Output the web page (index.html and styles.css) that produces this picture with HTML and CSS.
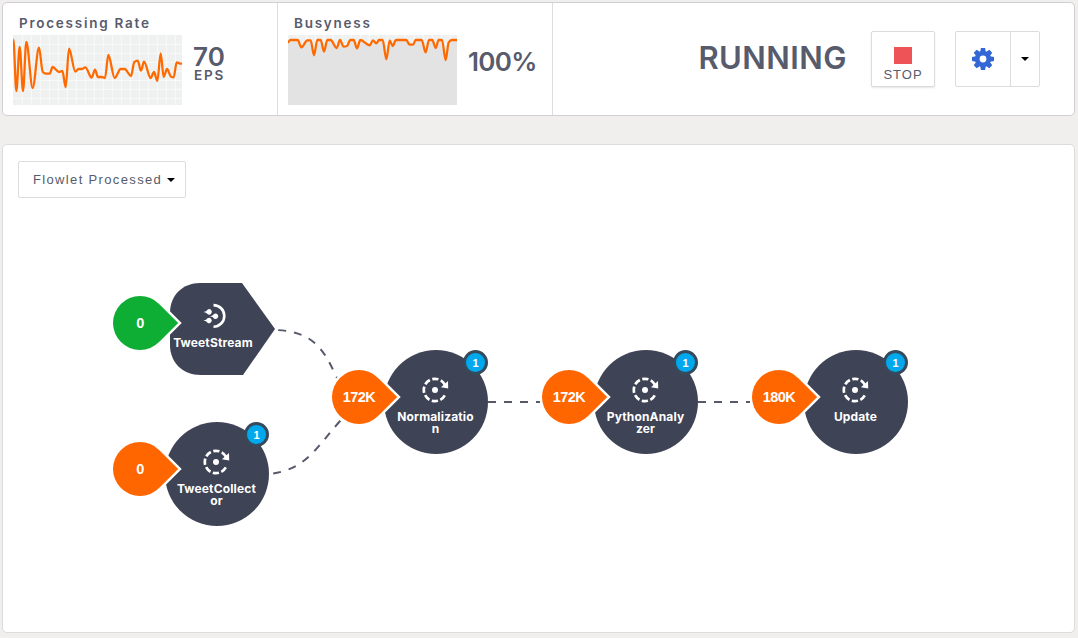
FILE: index.html
```html
<!DOCTYPE html>
<html lang="en">
<head>
<meta charset="utf-8">
<title>Flow status</title>
<link rel="stylesheet" href="styles.css">
</head>
<body>
<svg width="0" height="0" class="defs">
  <symbol id="flowlet" viewBox="0 0 28 28">
    <circle cx="14" cy="14" r="11.2" fill="none" stroke="#fff" stroke-width="2.7" stroke-dasharray="0 5.67 6.25 2.55 6.25 2.55 6.25 2.55 6.25 2.55 6.25 2.55 6.25 2.55 6.25 5.67"/>
    <circle cx="14" cy="14" r="3"/>
    <path d="M20 11.300 27.200 12.400 27 5z"/>
  </symbol>
</svg>

<header class="panel summary">
  <section class="metric">
    <h2>Processing Rate</h2>
    <div class="metric-body">
      <svg class="chart" id="rate" viewBox="39 105 507 210"></svg>
      <div class="value rate"><strong>70</strong><span>EPS</span></div>
    </div>
  </section>
  <section class="metric">
    <h2>Busyness</h2>
    <div class="metric-body">
      <svg class="chart" id="busy" viewBox="39 105 507 210"></svg>
      <div class="value busy"><strong>100%</strong></div>
    </div>
  </section>
  <div class="controls">
    <span class="status">RUNNING</span>
    <button class="btn stop"><i></i><span>STOP</span></button>
    <div class="btn split">
      <span class="gear"><svg width="22" height="22" viewBox="-11 -11 22 22" fill="#3367d6">
        <circle r="5.7" fill="none" stroke="#3367d6" stroke-width="4.6"/>
        <g id="teeth"></g>
      </svg></span>
      <span class="more"><b class="caret"></b></span>
    </div>
  </div>
</header>

<main class="panel flow">
  <button class="btn select">Flowlet Processed<b class="caret"></b></button>
  <div class="canvas">
    <svg class="links" width="1078" height="638" fill="none" stroke="#56596b" stroke-width="2" stroke-dasharray="8 8">
      <path d="M275 330C316 331 325 353 337 378" stroke-dashoffset="-3"/>
      <path d="M269 474C307 470 317 446 341 420" stroke-dashoffset="-4"/>
      <path d="M488 402H595M698 402H805"/>
    </svg>

    <div class="node stream" style="left:170px;top:283px">
      <svg class="shape" width="105" height="92"><path d="M30 0H72L105 46 73 92H31C12 92 0 79 0 62V30C0 12 13 0 30 0Z" fill="#3e4355"/></svg>
      <svg class="icon" width="28" height="28" viewBox="0 0 28 28"><path d="M13.5 3.1A10.8 10.8 0 0 1 13.500 24.700" fill="none" stroke="#fff" stroke-width="2.6"/><path d="M3.500 9.900Q6.500 9.400 7.500 7.700A2.700 2.700 0 1 1 7.500 12Q6.500 10.400 3.500 9.900ZM10 14.200Q13 13.700 14 12A2.700 2.700 0 1 1 14 16.400Q13 14.700 10 14.200ZM3.500 18.500Q6.500 18 7.500 16.300A2.700 2.700 0 1 1 7.500 20.700Q6.500 19 3.500 18.500Z"/></svg>
      <span class="label">TweetStream</span>
    </div>
    <div class="node" style="left:165px;top:422px"><svg class="icon" width="28" height="28"><use href="#flowlet"/></svg><span class="label">TweetCollect<br>or</span><em>1</em></div>
    <div class="node" style="left:384px;top:350px"><svg class="icon" width="28" height="28"><use href="#flowlet"/></svg><span class="label">Normalizatio<br>n</span><em>1</em></div>
    <div class="node" style="left:594px;top:350px"><svg class="icon" width="28" height="28"><use href="#flowlet"/></svg><span class="label">PythonAnaly<br>zer</span><em>1</em></div>
    <div class="node" style="left:804px;top:350px"><svg class="icon" width="28" height="28"><use href="#flowlet"/></svg><span class="label">Update</span><em>1</em></div>

    <div class="drop green" style="left:113px;top:296px"><span>0</span></div>
    <div class="drop" style="left:113px;top:442px"><span>0</span></div>
    <div class="drop" style="left:332px;top:370px"><span>172K</span></div>
    <div class="drop" style="left:542px;top:370px"><span>172K</span></div>
    <div class="drop" style="left:752px;top:370px"><span>180K</span></div>
  </div>
</main>
<script src="charts.js"></script>
</body>
</html>
```
FILE: styles.css
```css
* { box-sizing: border-box; }
body {
  margin: 0;
  padding: 2px 3px 5px 2px;
  height: 638px;
  overflow: hidden;
  background: #f0efed;
  font-family: "Liberation Sans", Arial, sans-serif;
  color: #575b6c;
}
.defs { position: absolute; }
.panel { background: #fff; border: 1px solid #dcdcdc; border-radius: 5px; }
.summary { display: flex; height: 114px; border-color: #cfcfd4; }
.metric { width: 275px; border-right: 1px solid #dcdcdc; padding: 12px 0 0 10px; }
.metric h2 { margin: 0 0 4px 6px; font: 600 13.5px/16px Inter, sans-serif; letter-spacing: 1.75px; }
.metric-body { display: flex; gap: 11px; }
.chart { width: 169px; height: 70px; background: #eff1f1; }
.value { font-family: Inter, sans-serif; font-weight: 600; }
.value strong { display: block; font-size: 26px; font-weight: 600; line-height: 26px; letter-spacing: .1px; }
.rate { padding-top: 9px; }
.rate span { display: block; font-size: 13.5px; line-height: 16px; letter-spacing: 1.8px; margin: -3px 0 0 1px; }
.busy { padding-top: 14px; }
.busy strong { letter-spacing: -.7px; }
.controls { flex: 1; display: flex; justify-content: flex-end; padding: 28px 34px 0 0; }
.status { font: 600 31px/54px Inter, sans-serif; letter-spacing: .45px; margin-right: 24px; }
.btn { background: #fff; border: 1px solid #dcdcdc; border-radius: 2px; padding: 0; color: inherit; font-family: inherit; }
.stop { width: 64px; height: 56px; margin-right: 20px; display: flex; flex-direction: column; align-items: center; padding-top: 15px; box-shadow: 0 1px 2px #0000001a; }
.stop i { width: 18px; height: 17px; background: #ee5358; }
.stop span { font-size: 13px; line-height: 15px; letter-spacing: 1px; margin: 3px 0 0 0; }
.split { display: flex; width: 85px; height: 56px; }
.gear { width: 55px; border-right: 1px solid #dcdcdc; display: flex; align-items: center; justify-content: center; }
.gear svg { margin-top: -1px; }
.more { flex: 1; display: flex; align-items: center; justify-content: center; }
.caret { border: 4px solid transparent; border-top-color: #000; border-bottom: 0; }
.flow { margin-top: 28px; height: 489px; padding: 16px 0 0 15px; }
.select { display: flex; align-items: center; gap: 5px; width: 168px; height: 37px; padding-left: 14px; font-size: 13px; letter-spacing: 1.35px; white-space: nowrap; }
.canvas, .links { position: absolute; left: 0; top: 0; }
.node { position: absolute; width: 104px; height: 104px; border-radius: 50%; background: #3e4355; color: #fff; }
.stream { width: 105px; height: 92px; background: none; border-radius: 0; }
.shape { position: absolute; left: 0; top: 0; }
.icon { position: absolute; left: 37px; top: 26px; fill: #fff; }
.stream .icon { left: 30px; top: 19px; }
.label { position: absolute; left: -1px; right: 0; top: 61px; text-align: center; font: 700 12px/12px Inter, sans-serif; letter-spacing: .15px; }
.stream .label { top: 54px; left: -19px; }
.node em { position: absolute; left: 79px; top: 0; width: 25px; height: 25px; border: 3px solid #374a5b; border-radius: 50%; background: #00a9ee; font: 700 11px/20px "Liberation Sans", sans-serif; text-align: center; }
.drop { position: absolute; width: 54px; height: 54px; }
.drop::before { content: ""; position: absolute; inset: 0; background: #ff6600; border-radius: 50% 0 50% 50%; transform: rotate(45deg); box-shadow: 0 0 0 2.500px #fff; }
.green::before { background: #0dae33; }
.drop span { position: relative; display: block; text-align: center; font-size: 14.500px; font-weight: 700; line-height: 54px; color: #fff; letter-spacing: -.5px; }
```
FILE: charts.js
```js
const series = {
  rate: [40,118, 49,273, 59,141, 69,273, 79,126, 98,264, 117,143, 128,215, 138,221, 149,221, 158,201, 177,216, 187,213, 197,262, 207,146, 226,215, 236,207, 246,207, 256,202, 275,233, 285,209, 294,231, 305,231, 315,234, 325,165, 344,234, 362,207, 374,207, 393,228, 403,186, 413,182, 423,212, 432,185, 452,234, 462,216, 472,243, 482,160, 491,231, 501,207, 513,230, 521,232, 530,187, 538,190, 546,191],
  busy: [39,127, 46,120, 68,120, 79,142, 97,121, 107,121, 117,166, 127,120, 137,120, 147,155, 157,120, 167,120, 185,144, 195,120, 206,140, 216,138, 226,120, 236,120, 246,145, 256,120, 284,136, 294,121, 304,130, 312,120, 323,120, 334,178, 344,121, 353,138, 363,120, 394,120, 403,133, 414,134, 422,120, 440,120, 452,157, 462,120, 472,120, 482,144, 491,120, 501,120, 512,180, 521,127, 530,120, 546,120]
};

// Monotone cubic interpolation through the samples.
function curve(v) {
  const p = [];
  for (let i = 0; i < v.length; i += 2) p.push([v[i], v[i + 1]]);
  const slope = (a, b) => (b[1] - a[1]) / (b[0] - a[0]);
  const t = p.map((q, i) => {
    if (!i || i === p.length - 1) return 0;
    const a = slope(p[i - 1], q), b = slope(q, p[i + 1]);
    return a * b <= 0 ? 0 : 2 * a * b / (a + b);
  });
  let d = `M${p[0]}`;
  for (let i = 1; i < p.length; i++) {
    const h = (p[i][0] - p[i - 1][0]) / 3;
    d += `C${p[i - 1][0] + h} ${p[i - 1][1] + t[i - 1] * h} ${p[i][0] - h} ${p[i][1] - t[i] * h} ${p[i]}`;
  }
  return d;
}

for (const id of ["rate", "busy"]) {
  let grid = "";
  for (let x = 67; x < 546; x += 27) grid += `M${x} 105V315`;
  for (let y = 133; y < 315; y += 27) grid += `M39 ${y}H546`;
  const d = curve(series[id]);
  const area = id === "busy" ? `<path d="${d}V315H39Z" fill="#e3e3e3"/>` : "";
  document.getElementById(id).innerHTML =
    `<path d="${grid}" stroke="#f8f9f9" stroke-width="3"/>${area}<path d="${d}" fill="none" stroke="#ff6a00" stroke-width="6.8"/>`;
}

let teeth = "";
for (let a = 0; a < 360; a += 45) teeth += `<path d="M-2.800 -7L-2.100 -11H2.100L2.800 -7Z" transform="rotate(${a})"/>`;
document.getElementById("teeth").innerHTML = teeth;
```
